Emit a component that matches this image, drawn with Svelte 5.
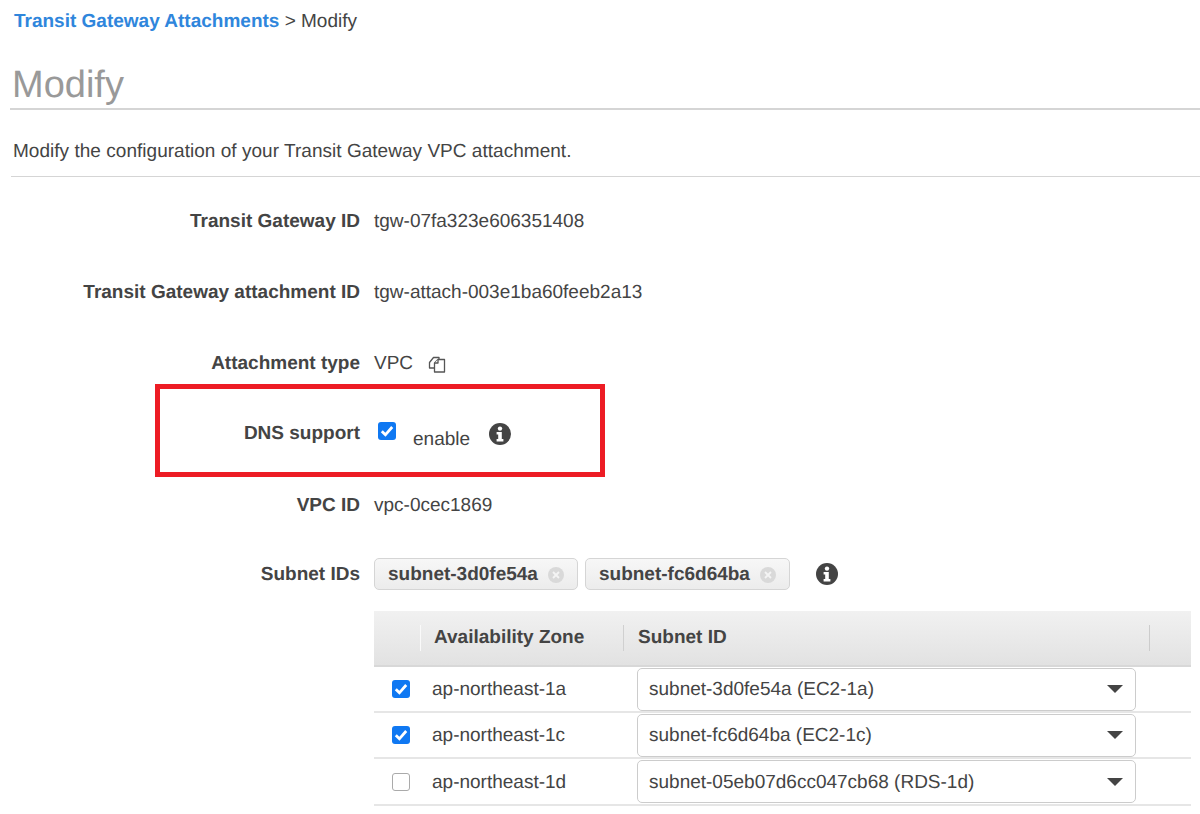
<script>
  const details = [
    { label: 'Transit Gateway ID', value: 'tgw-07fa323e606351408' },
    { label: 'Transit Gateway attachment ID', value: 'tgw-attach-003e1ba60feeb2a13' }
  ];
  const zones = [
    { az: 'ap-northeast-1a', subnet: 'subnet-3d0fe54a (EC2-1a)', on: true },
    { az: 'ap-northeast-1c', subnet: 'subnet-fc6d64ba (EC2-1c)', on: true },
    { az: 'ap-northeast-1d', subnet: 'subnet-05eb07d6cc047cb68 (RDS-1d)', on: false }
  ];
  const tags = ['subnet-3d0fe54a', 'subnet-fc6d64ba'];
</script>

{#snippet check(on)}
  <span class="check" class:on>
    {#if on}
      <svg viewBox="0 0 18 18" width="18" height="18"><path d="M3.8 9.2l3.6 3.6 6.8-7.8" fill="none" stroke="#fff" stroke-width="2.8" /></svg>
    {/if}
  </span>
{/snippet}

{#snippet info()}
  <svg class="info" viewBox="0 0 22 22" width="22" height="22">
    <circle cx="11" cy="11" r="11" fill="#444" />
    <circle cx="11" cy="5.6" r="2.2" fill="#fff" />
    <path d="M7.6 9h5.2v7h1.6v2.4H7.6V16h1.6v-4.6H7.6z" fill="#fff" />
  </svg>
{/snippet}

<div class="page">
  <div class="crumb"><a href="#top">Transit Gateway Attachments</a> &gt; Modify</div>
  <h1>Modify</h1>
  <p class="desc">Modify the configuration of your Transit Gateway VPC attachment.</p>

  <div class="form">
    {#each details as d}
      <div class="row">
        <div class="label">{d.label}</div>
        <div class="value">{d.value}</div>
      </div>
    {/each}
    <div class="row">
      <div class="label">Attachment type</div>
      <div class="value">
        VPC
        <svg class="copy" viewBox="0 0 18 18" width="18" height="18" fill="#fff" stroke="#555" stroke-width="1.3" stroke-linejoin="round">
          <path d="M1.5 7.5l4-5h5.5v10.5H1.5z" />
          <path d="M6.5 8l3.5-3.5h6.5v12.5H6.5z" />
          <path d="M6.5 8h3.5V4.5" />
        </svg>
      </div>
    </div>
    <div class="row">
      <div class="label dns-label">DNS support</div>
      <div class="value dns">
        {@render check(true)}
        <span class="enable">enable</span>
        {@render info()}
      </div>
    </div>
    <div class="row">
      <div class="label">VPC ID</div>
      <div class="value">vpc-0cec1869</div>
    </div>
    <div class="row subnets">
      <div class="label">Subnet IDs</div>
      <div class="value tags">
        {#each tags as t}
          <span class="tag">{t}
            <svg viewBox="0 0 16 16" width="16" height="16">
              <circle cx="8" cy="8" r="8" fill="#d9d9d9" />
              <path d="M5 5l6 6M11 5l-6 6" stroke="#f4f4f4" stroke-width="1.8" />
            </svg>
          </span>
        {/each}
        {@render info()}
      </div>
    </div>

    <div class="table">
      <div class="thead">
        <div class="th first"></div>
        <div class="th az">Availability Zone</div>
        <div class="th sub">Subnet ID</div>
      </div>
      {#each zones as z}
        <div class="tr">
          <div class="td first">{@render check(z.on)}</div>
          <div class="td az">{z.az}</div>
          <div class="td sub">
            <div class="select">
              <span>{z.subnet}</span>
              <i class="caret"></i>
            </div>
          </div>
        </div>
      {/each}
    </div>
  </div>

  <div class="highlight"></div>
</div>

<style>
  :global(body) {
    margin: 0;
    background: #fff;
  }
  .page {
    position: relative;
    width: 1200px;
    height: 814px;
    overflow: hidden;
    font-family: "Liberation Sans", Arial, sans-serif;
    font-size: 19px;
    color: #444;
    text-rendering: geometricPrecision;
  }
  .crumb {
    padding: 11px 0 0 14px;
    line-height: 21px;
  }
  .crumb a {
    color: #2f86dc;
    font-weight: 700;
    text-decoration: none;
  }
  h1 {
    margin: 31px 0 0 10px;
    padding: 0 0 0 2px;
    font-size: 38px;
    font-weight: 400;
    line-height: 45px;
    color: #999;
    border-bottom: 2px solid #d5d5d5;
  }
  .desc {
    margin: 31px 0 0 11px;
    padding: 0 0 14px 2px;
    line-height: 21px;
    letter-spacing: 0.03px;
    border-bottom: 1px solid #d5d5d5;
  }
  .form {
    padding-top: 9px;
  }
  .row {
    display: grid;
    grid-template-columns: 360px 1fr;
    column-gap: 14px;
    align-items: center;
    height: 71px;
  }
  .label {
    text-align: right;
    font-weight: 700;
  }
  .dns-label {
    margin-bottom: 2px;
  }
  .value {
    display: flex;
    align-items: center;
    gap: 15px;
  }
  .dns {
    gap: 0;
    margin-left: 4px;
  }
  .dns .check {
    margin-bottom: 7px;
  }
  .dns .info {
    margin-bottom: 2px;
  }
  .enable {
    margin: 11px 19px 0 17px;
  }
  .check {
    box-sizing: border-box;
    display: block;
    width: 18px;
    height: 18px;
    border: 1px solid #aaa;
    border-radius: 3px;
    background: #fff;
  }
  .check.on {
    border: none;
    background: #0f78f2;
  }
  .check svg {
    display: block;
  }
  .subnets {
    box-sizing: border-box;
    height: 70px;
    padding-top: 17px;
    align-items: start;
  }
  .subnets .label {
    line-height: 34px;
  }
  .tags {
    gap: 7px;
  }
  .tag {
    box-sizing: border-box;
    display: flex;
    align-items: center;
    gap: 10px;
    height: 32px;
    padding: 1px 13px 0;
    border: 1px solid #d5d5d5;
    border-radius: 5px;
    background: linear-gradient(#f7f7f7, #ececec);
    font-weight: 700;
  }
  .tags .info {
    margin-left: 19px;
  }
  .table {
    margin-left: 374px;
    width: 817px;
  }
  .thead {
    display: flex;
    height: 56px;
    box-sizing: border-box;
    align-items: center;
    border-bottom: 2px solid #d8d8d8;
    background: linear-gradient(#f1f1f1, #e2e2e2);
    font-weight: 700;
  }
  .th {
    height: 26px;
    line-height: 26px;
    box-sizing: border-box;
  }
  .first {
    width: 46px;
    flex: none;
  }
  .az {
    width: 204px;
    flex: none;
  }
  .th.first {
    width: 47px;
    border-right: 1px solid #fafafa;
  }
  .th.az {
    width: 203px;
    padding-left: 13px;
    border-right: 1px solid #d0d0d0;
  }
  .th.sub {
    flex: 1;
    margin-right: 41px;
    padding-left: 14px;
    border-right: 1px solid #ccc;
  }
  .tr {
    display: flex;
    align-items: center;
    height: 46px;
    box-sizing: border-box;
    border-bottom: 2px solid #e6e6e6;
  }
  .tr:last-child {
    height: 47px;
  }
  .td.first {
    padding-left: 18px;
    box-sizing: border-box;
  }
  .td.az {
    padding: 2px 0 0 12px;
    width: 217px;
    box-sizing: border-box;
  }
  .td.sub {
    flex: 1;
    padding-right: 55px;
  }
  .select {
    box-sizing: border-box;
    display: flex;
    align-items: center;
    justify-content: space-between;
    height: 43px;
    padding: 0 12px 0 11px;
    border: 1px solid #ccc;
    border-radius: 5px;
    background: #fff;
  }
  .select span {
    padding-top: 2px;
  }
  .caret {
    width: 0;
    height: 0;
    border-left: 8px solid transparent;
    border-right: 8px solid transparent;
    border-top: 8px solid #444;
  }
  .highlight {
    position: absolute;
    left: 155px;
    top: 384px;
    width: 450px;
    height: 93px;
    box-sizing: border-box;
    border: 5px solid #ed1c24;
  }
</style>
